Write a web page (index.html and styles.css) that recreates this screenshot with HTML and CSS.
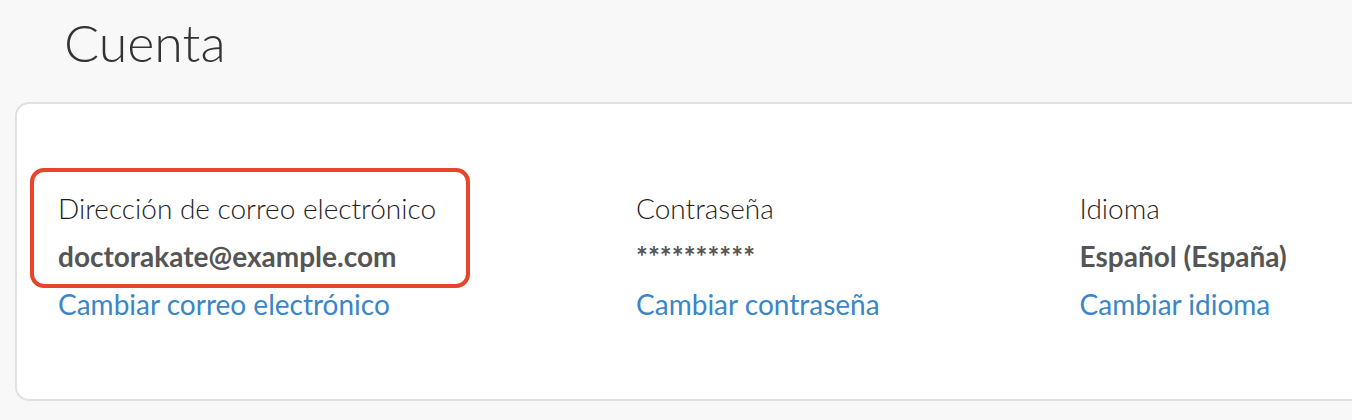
FILE: index.html
```html
<!DOCTYPE html>
<html lang="es">
<head>
<meta charset="utf-8">
<title>Cuenta</title>
<link rel="stylesheet" href="styles.css">
</head>
<body>
<main class="page">
  <h1 class="title">Cuenta</h1>
  <section class="card">
    <div class="fields">
      <div class="field">
        <div class="highlight">
          <div class="label">Dirección de correo electrónico</div>
          <div class="value">doctorakate@example.com</div>
        </div>
        <a class="link" href="#">Cambiar correo electrónico</a>
      </div>
      <div class="field">
        <div class="label">Contraseña</div>
        <div class="value">**********</div>
        <a class="link" href="#">Cambiar contraseña</a>
      </div>
      <div class="field">
        <div class="label">Idioma</div>
        <div class="value">Español (España)</div>
        <a class="link" href="#">Cambiar idioma</a>
      </div>
    </div>
  </section>
</main>
</body>
</html>
```

FILE: styles.css
```css
html, body {
  margin: 0;
  padding: 0;
  background: #f8f8f8;
  overflow: hidden;
}
body {
  font-family: Lato, "Open Sans", sans-serif;
  color: #222;
}
.page {
  padding-left: 15px;
}
.title {
  margin: 0;
  padding: 13px 0 0 49px;
  height: 88px;
  box-sizing: border-box;
  font-size: 52px;
  font-weight: 300;
  line-height: 58px;
  color: #333;
}
.card {
  box-sizing: border-box;
  width: calc(100% + 40px);
  height: 299px;
  margin-top: 14px;
  background: #fff;
  border: 2px solid #e0e0e0;
  border-radius: 14px;
  padding: 80px 0 0 41px;
}
.fields {
  display: flex;
  gap: 200px;
  align-items: flex-start;
}
.field {
  display: flex;
  flex-direction: column;
  align-items: flex-start;
}
.highlight {
  position: relative;
}
.highlight::after {
  content: "";
  position: absolute;
  top: -16px;
  bottom: -8px;
  left: -28px;
  right: -34px;
  border: 4px solid #e8432b;
  border-radius: 14px;
  pointer-events: none;
}
.label {
  font-size: 28px;
  font-weight: 300;
  line-height: 48px;
  color: #1e1e1e;
}
.value {
  font-size: 28px;
  font-weight: 700;
  line-height: 48px;
  color: #555;
}
.link {
  font-size: 28px;
  font-weight: 400;
  line-height: 48px;
  color: #3a86c8;
  text-decoration: none;
}
```
